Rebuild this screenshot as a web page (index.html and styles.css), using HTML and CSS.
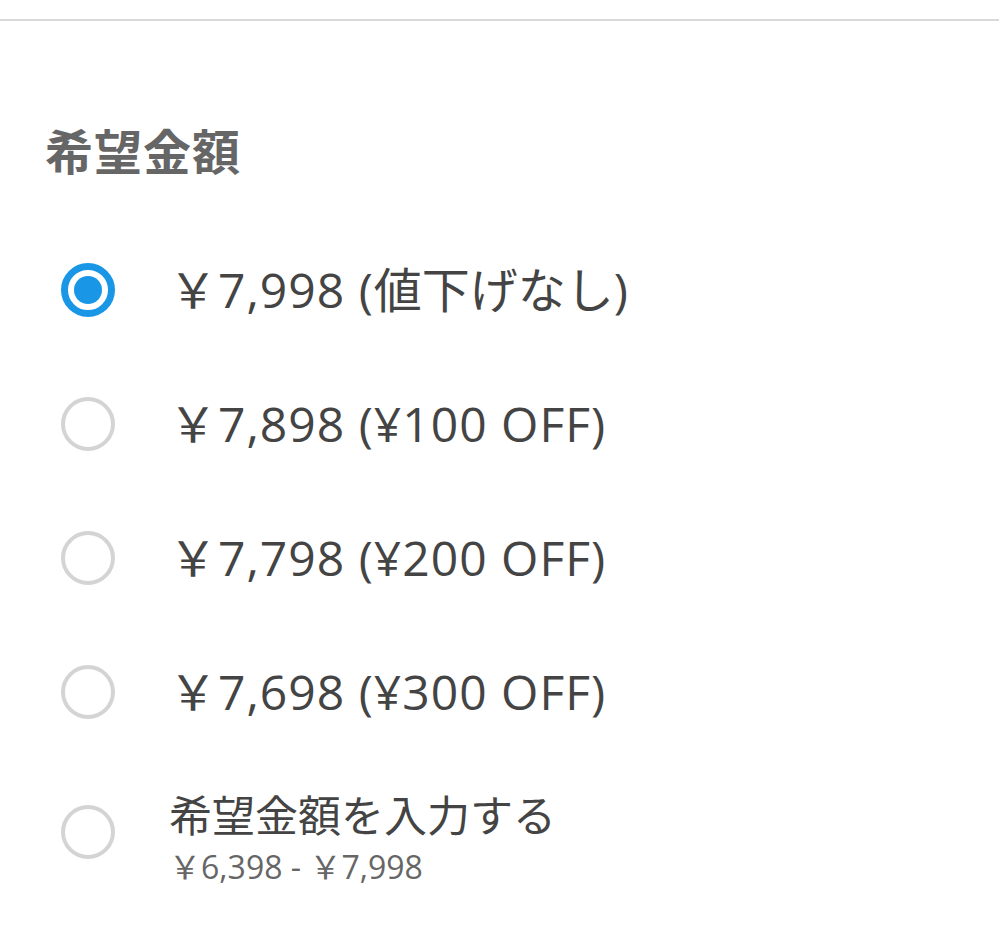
FILE: index.html
```html
<!DOCTYPE html>
<html lang="ja">
<head>
<meta charset="utf-8">
<link rel="stylesheet" href="styles.css">
</head>
<body>
<section class="price-section">
  <h2 class="title">希望金額</h2>
  <ul class="options">
    <li class="option">
      <span class="radio radio-on"></span>
      <div class="label"><span class="main">￥7,998 (<span class="jp">値下げなし</span>)</span></div>
    </li>
    <li class="option">
      <span class="radio"></span>
      <div class="label"><span class="main">￥7,898 (¥100 OFF)</span></div>
    </li>
    <li class="option">
      <span class="radio"></span>
      <div class="label"><span class="main">￥7,798 (¥200 OFF)</span></div>
    </li>
    <li class="option">
      <span class="radio"></span>
      <div class="label"><span class="main">￥7,698 (¥300 OFF)</span></div>
    </li>
    <li class="option option-custom">
      <span class="radio"></span>
      <div class="label label-custom">
        <span class="main main-custom">希望金額を入力する</span>
        <span class="sub">￥6,398 - ￥7,998</span>
      </div>
    </li>
  </ul>
</section>
</body>
</html>
```

FILE: styles.css
```css
html, body {
  margin: 0;
  padding: 0;
  background: #ffffff;
}
body {
  font-family: "Open Sans", "Noto Sans CJK JP", sans-serif;
  color: #444444;
}
.price-section {
  margin-top: 19px;
  border-top: 2px solid #d9d9d9;
  padding: 0 0 0 45px;
}
.title {
  margin: 96px 0 0 0;
  font-family: "Noto Sans CJK JP", sans-serif;
  font-size: 48px;
  line-height: 64px;
  font-weight: 700;
  color: #666666;
  letter-spacing: 1px;
}
.options {
  list-style: none;
  margin: 42px 0 0 0;
  padding: 0;
}
.option {
  display: flex;
  align-items: center;
  height: 134px;
}
.radio {
  box-sizing: border-box;
  flex: 0 0 auto;
  width: 54px;
  height: 54px;
  margin-left: 16px;
  margin-right: 54px;
  border-radius: 50%;
  border: 4.5px solid #d4d4d4;
  display: flex;
  align-items: center;
  justify-content: center;
}
.radio-on {
  border: 7px solid #1a96e6;
}
.radio-on::after {
  content: "";
  width: 28px;
  height: 28px;
  border-radius: 50%;
  background: #1a96e6;
}
.label {
  display: flex;
  flex-direction: column;
}
.label-custom {
  padding-top: 13px;
}
.main {
  font-size: 48px;
  line-height: 60px;
  letter-spacing: 1px;
}
.jp {
  letter-spacing: 0;
}
.main-custom {
  font-size: 43px;
  line-height: 56px;
  letter-spacing: 0;
}
.sub {
  margin-top: 1px;
  font-size: 32px;
  line-height: 44px;
  color: #666666;
}
.option-custom {
  height: 146px;
}
```
